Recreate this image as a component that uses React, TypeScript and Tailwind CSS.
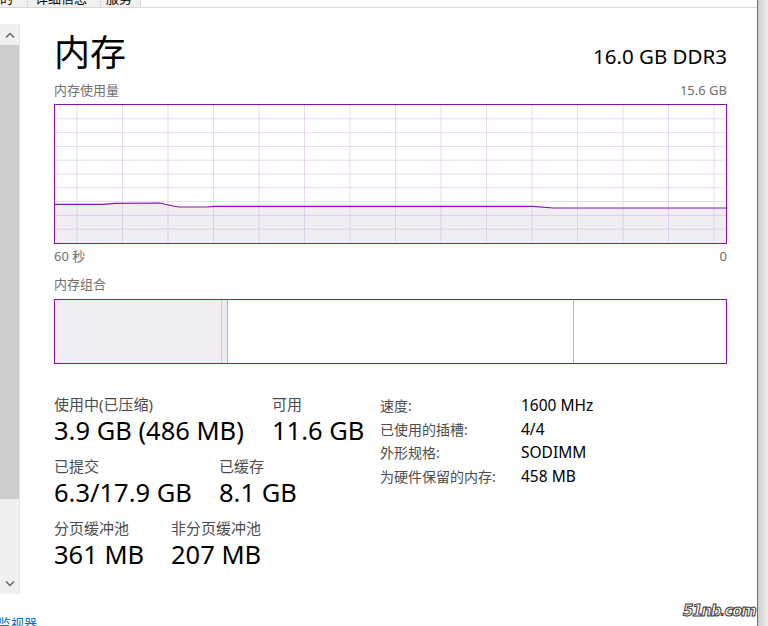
const font = "font-['Noto_Sans','Noto_Sans_CJK_SC',sans-serif]"

const specs = [
  { label: "速度:", value: "1600 MHz" },
  { label: "已使用的插槽:", value: "4/4" },
  { label: "外形规格:", value: "SODIMM" },
  { label: "为硬件保留的内存:", value: "458 MB" },
]

const stats = [
  [{ label: "使用中(已压缩)", value: "3.9 GB (486 MB)", w: "w-[218px]" }, { label: "可用", value: "11.6 GB" }],
  [{ label: "已提交", value: "6.3/17.9 GB", w: "w-[165px]" }, { label: "已缓存", value: "8.1 GB" }],
  [{ label: "分页缓冲池", value: "361 MB", w: "w-[117px]" }, { label: "非分页缓冲池", value: "207 MB" }],
]

// memory usage over last 60 s, in graph coordinates (671 x 138)
const usage = "0,99.3 48,99.3 60,98.3 105,98 118,101 124,102 152,102 160,101.3 478,101.3 498,103 671,103"

function UsageGraph() {
  const cols = Array.from({ length: 15 }, (_, i) => 22 + i * 45.5)
  const rows = Array.from({ length: 9 }, (_, i) => 13.8 + i * 13.8)
  return (
    <div className="h-[140px] border border-[#8b12ae] bg-white">
      <svg width="671" height="138" viewBox="0 0 671 138" className="block">
        <polygon points={`${usage} 671,138 0,138`} fill="#f1eef3" />
        {cols.map((x) => (
          <line key={x} x1={x} y1="0" x2={x} y2="138" stroke="#cea0de" strokeOpacity="0.4" />
        ))}
        {rows.map((y) => (
          <line key={y} x1="0" y1={y} x2="671" y2={y} stroke="#cea0de" strokeOpacity="0.4" />
        ))}
        <polyline points={usage} fill="none" stroke="#8b12ae" strokeWidth="1.2" />
      </svg>
    </div>
  )
}

function Composition() {
  return (
    <div className="h-[65px] border border-[#8b12ae] flex">
      <div className="w-[167px] bg-[#f1eef3] border-r border-[#d6bde2]"></div>
      <div className="w-[6px] bg-[#f0e8f3] border-r border-[#c9a6d8]"></div>
      <div className="w-[346px] bg-white border-r border-[#cda6dc]"></div>
      <div className="flex-1 bg-white"></div>
    </div>
  )
}

function Scrollbar() {
  return (
    <div className="w-[20px] mt-[16px] h-[570px] bg-[#f0f0f0] border-r border-[#e6e6e6] flex flex-col">
      <div className="h-[21px] flex items-center justify-center">
        <svg width="10" height="6" viewBox="0 0 10 6"><path d="M1 5.5 L5 1.5 L9 5.5" fill="none" stroke="#606060" strokeWidth="1.4" /></svg>
      </div>
      <div className="h-[454px] bg-[#cdcdcd]"></div>
      <div className="flex-1"></div>
      <div className="h-[21px] flex items-center justify-center">
        <svg width="10" height="6" viewBox="0 0 10 6"><path d="M1 0.5 L5 4.5 L9 0.5" fill="none" stroke="#606060" strokeWidth="1.4" /></svg>
      </div>
    </div>
  )
}

export default function App() {
  return (
    <div className={`w-[768px] h-[626px] bg-white overflow-hidden flex relative ${font}`}>
      <div className="flex-1 flex flex-col min-w-0">
        {/* tab strip, mostly scrolled off */}
        <div className="h-[8px] border-b border-[#d9d9d9] flex text-[13px] leading-[17px] text-black overflow-hidden">
          <div className="w-[28px] bg-[#f0f0f0] border-r border-[#d9d9d9] -mt-[10px] overflow-hidden flex justify-end pr-[14px]"><span className="whitespace-nowrap">的</span></div>
          <div className="w-[73px] bg-[#f0f0f0] border-r border-[#d9d9d9] -mt-[10px] pl-[7px]">详细信息</div>
          <div className="w-[40px] bg-[#f0f0f0] border-r border-[#d9d9d9] -mt-[10px] pl-[5px]">服务</div>
        </div>

        <div className="flex flex-1">
          <Scrollbar />
          <div className="flex-1 pl-[34px] pr-[30px]">
            <div className="mt-[27px] flex justify-between items-start">
              <div className="text-[36px] leading-[36px] font-normal text-black">内存</div>
              <div className="text-[20.5px] leading-[24px] mt-[9px] text-black">16.0 GB DDR3</div>
            </div>

            <div className="mt-[11px] flex justify-between text-[13px] leading-[17px] text-[#707070]">
              <span>内存使用量</span>
              <span>15.6 GB</span>
            </div>
            <div className="mt-[5px]"><UsageGraph /></div>
            <div className="mt-[4px] flex justify-between text-[13px] leading-[17px] text-[#707070]">
              <span>60 秒</span>
              <span>0</span>
            </div>

            <div className="mt-[11px] text-[13px] leading-[17px] text-[#707070]">内存组合</div>
            <div className="mt-[6px]"><Composition /></div>

            <div className="mt-[31px] flex">
              <div className="w-[326px] flex flex-col gap-[10px]">
                {stats.map((row, i) => (
                  <div key={i} className="flex">
                    {row.map((s) => (
                      <div key={s.label} className={s.w ?? ""}>
                        <div className="text-[15px] leading-[19px] text-[#4c4c4c]">{s.label}</div>
                        <div className="text-[25.5px] leading-[33px] text-black whitespace-nowrap">{s.value}</div>
                      </div>
                    ))}
                  </div>
                ))}
              </div>
              <div className="mt-[1px] grid grid-cols-[141px_auto] gap-y-[4.7px] text-[14px] leading-[19px] h-fit">
                {specs.map((s) => (
                  <div key={s.label} className="contents">
                    <div className="text-[#4c4c4c]">{s.label}</div>
                    <div className="text-black text-[15.5px]">{s.value}</div>
                  </div>
                ))}
              </div>
            </div>
          </div>
        </div>

        <div className="h-[10px] flex overflow-visible">
          <div className="w-[37px] overflow-hidden flex justify-end">
            <span className="whitespace-nowrap text-[13px] leading-[17px] text-[#0066cc] -mt-[1px]">打开资源监视器</span>
          </div>
        </div>
      </div>

      {/* window edge */}
      <div className="w-[11px] border-l border-[#6e6e6e] bg-gradient-to-r from-[#cfcfcf] to-[#efefef]"></div>

      <div className="absolute left-[683px] top-[602px] text-[15px] leading-[18px] font-black italic tracking-[-1.3px] text-white [-webkit-text-stroke:1px_#3a3a3a] font-['DejaVu_Sans',sans-serif]">
        51nb<span className="text-[#e01010] [-webkit-text-stroke:0px]">.</span>com
      </div>
    </div>
  )
}
